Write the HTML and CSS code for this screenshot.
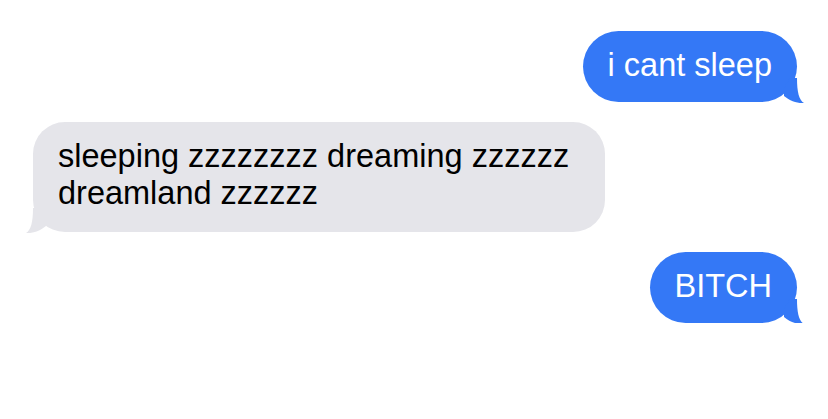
FILE: index.html
```html
<!DOCTYPE html>
<html>
<head>
<meta charset="utf-8">
<link rel="stylesheet" href="styles.css">
</head>
<body>
<div class="chat">
  <div class="msg sent">i cant sleep<svg class="tail" viewBox="0 0 30 26" width="30" height="26"><path d="M20 0 C20 14 22 22 27 25 C20 25.5 13 23 7 18 L7 10 L13 0 Z"/></svg></div>
  <div class="msg received">sleeping zzzzzzzz dreaming zzzzzz dreamland zzzzzz<svg class="tail" viewBox="0 0 30 26" width="30" height="26"><path d="M20 0 C20 14 22 22 27 25 C20 25.5 13 23 7 18 L7 10 L13 0 Z"/></svg></div>
  <div class="msg sent">BITCH<svg class="tail" viewBox="0 0 30 26" width="30" height="26"><path d="M20 0 C20 14 22 22 27 25 C20 25.5 13 23 7 18 L7 10 L13 0 Z"/></svg></div>
</div>
</body>
</html>
```
FILE: styles.css
```css
html, body {
  margin: 0;
  padding: 0;
  background: #ffffff;
}
.chat {
  display: flex;
  flex-direction: column;
  gap: 20px;
  padding: 31px 31px 0 33px;
  font-family: "Liberation Sans", Arial, sans-serif;
  font-size: 32.5px;
  line-height: 37px;
}
.msg {
  position: relative;
  box-sizing: border-box;
  padding: 16px 25px 18px;
  border-radius: 36px;
  max-width: 572px;
}
.sent {
  align-self: flex-end;
  background: #3478f6;
  color: #ffffff;
}
.received {
  align-self: flex-start;
  background: #e5e5ea;
  color: #000000;
  padding: 16px 25px 20px;
  border-radius: 32px;
}
.tail {
  position: absolute;
  bottom: -2px;
  display: block;
}
.sent .tail {
  right: -10px;
  fill: #3478f6;
}
.received .tail {
  left: -10px;
  fill: #e5e5ea;
  transform: scaleX(-1);
}
```
